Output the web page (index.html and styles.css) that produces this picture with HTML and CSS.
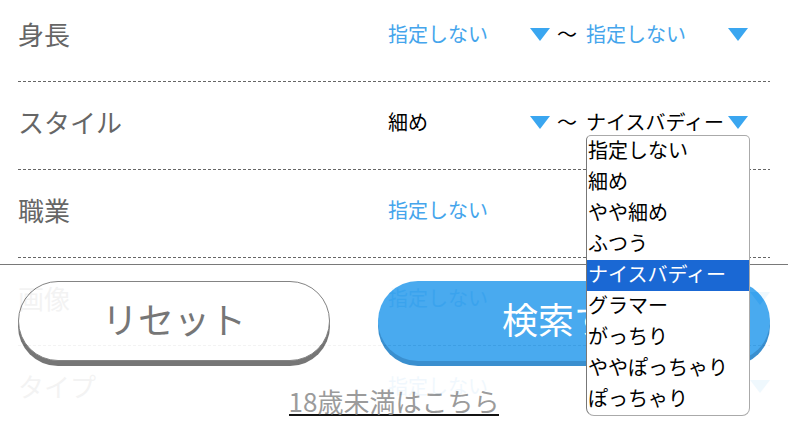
FILE: index.html
```html
<!DOCTYPE html>
<html lang="ja">
<head>
<meta charset="utf-8">
<link rel="stylesheet" href="styles.css">
</head>
<body>
<div class="form">
  <div class="row">
    <div class="label">身長</div>
    <div class="field">
      <div class="sel"><span class="val blue">指定しない</span><span class="arrow"></span></div>
      <span class="tilde">〜</span>
      <div class="sel"><span class="val blue">指定しない</span><span class="arrow"></span></div>
    </div>
  </div>
  <div class="row">
    <div class="label">スタイル</div>
    <div class="field">
      <div class="sel"><span class="val">細め</span><span class="arrow"></span></div>
      <span class="tilde">〜</span>
      <div class="sel"><span class="val">ナイスバディー</span><span class="arrow"></span></div>
    </div>
  </div>
  <div class="row">
    <div class="label">職業</div>
    <div class="field">
      <div class="sel mid"><span class="val blue">指定しない</span><span class="arrow"></span></div>
    </div>
  </div>
  <div class="row">
    <div class="label">画像</div>
    <div class="field">
      <div class="sel wide"><span class="val blue">指定しない</span><span class="arrow"></span></div>
    </div>
  </div>
  <div class="row">
    <div class="label">タイプ</div>
    <div class="field">
      <div class="sel wide"><span class="val blue">指定しない</span><span class="arrow"></span></div>
    </div>
  </div>
</div>

<div class="footer">
  <div class="buttons">
    <div class="btn reset">リセット</div>
    <div class="btn search">検索する</div>
  </div>
  <div class="note"><span class="link">18歳未満はこちら</span></div>
</div>

<ul class="dropdown">
  <li>指定しない</li>
  <li>細め</li>
  <li>やや細め</li>
  <li>ふつう</li>
  <li class="selected">ナイスバディー</li>
  <li>グラマー</li>
  <li>がっちり</li>
  <li>ややぽっちゃり</li>
  <li>ぽっちゃり</li>
</ul>
</body>
</html>
```

FILE: styles.css
```css
* { box-sizing: border-box; }
html, body { margin: 0; padding: 0; background: #fff; }
body {
  width: 788px;
  height: 427px;
  overflow: hidden;
  font-family: "Noto Sans CJK JP", "Noto Sans", sans-serif;
  position: relative;
}
.form {
  margin-top: -6px;
  padding: 0 18px;
}
.row {
  display: flex;
  align-items: center;
  height: 88px;
  padding-bottom: 7px;
  background-image: repeating-linear-gradient(to right, #666 0 3px, transparent 3px 5px);
  background-size: 100% 1px;
  background-position: left bottom;
  background-repeat: no-repeat;
}
.label {
  width: 370px;
  font-size: 26px;
  color: #666;
  line-height: 30px;
  padding-bottom: 1px;
}
.field {
  display: flex;
  align-items: center;
  font-size: 20px;
  line-height: 26px;
}
.sel {
  width: 162px;
  display: flex;
  align-items: center;
  justify-content: space-between;
}
.sel.mid { width: 360px; }
.sel.wide { width: 382px; }
.val { color: #000; white-space: nowrap; padding-bottom: 1px; }
.val.blue { color: #45a5ec; }
.arrow {
  width: 0;
  height: 0;
  border-left: 10px solid transparent;
  border-right: 10px solid transparent;
  border-top: 13px solid #3aa6f0;
}
.tilde {
  width: 36px;
  text-align: center;
  color: #000;
  padding-right: 2px;
  padding-bottom: 1px;
}

.footer {
  position: absolute;
  left: 0;
  right: 0;
  top: 264px;
  bottom: 0;
  background: #fff;
  opacity: 0.92;
  border-top: 1px solid #6e6e6e;
  padding: 16px 18px 0;
}
.buttons {
  display: flex;
  justify-content: space-between;
  height: 80px;
}
.btn {
  height: 80px;
  border-radius: 40px;
  display: flex;
  align-items: center;
  justify-content: center;
  font-size: 36px;
  line-height: 40px;
  padding-bottom: 6px;
}
.reset {
  width: 312px;
  background: #fff;
  border: 1px solid #7a7a7a;
  color: #6b6b6b;
  box-shadow: 0 5px 0 #6b6b6b;
}
.search {
  width: 392px;
  background: #3aa3ee;
  color: #fff;
  box-shadow: 0 5px 0 #2a86cb;
}
.note {
  margin-top: 27px;
  text-align: center;
}
.link {
  display: inline-block;
  font-size: 26px;
  line-height: 26px;
  color: #939393;
  border-bottom: 2px solid #000;
}

.dropdown {
  position: absolute;
  left: 586px;
  top: 135px;
  width: 164px;
  height: 281px;
  margin: 0;
  padding: 0;
  list-style: none;
  background: #fff;
  border: 1px solid #aaa;
  border-left-color: #777;
  border-radius: 5px 5px 8px 8px;
  overflow: hidden;
}
.dropdown li {
  height: 31px;
  line-height: 27px;
  padding-bottom: 4px;
  font-size: 20px;
  color: #000;
  padding-left: 1px;
  white-space: nowrap;
}
.dropdown li.selected {
  background: #1a68d4;
  color: #fff;
}
```
